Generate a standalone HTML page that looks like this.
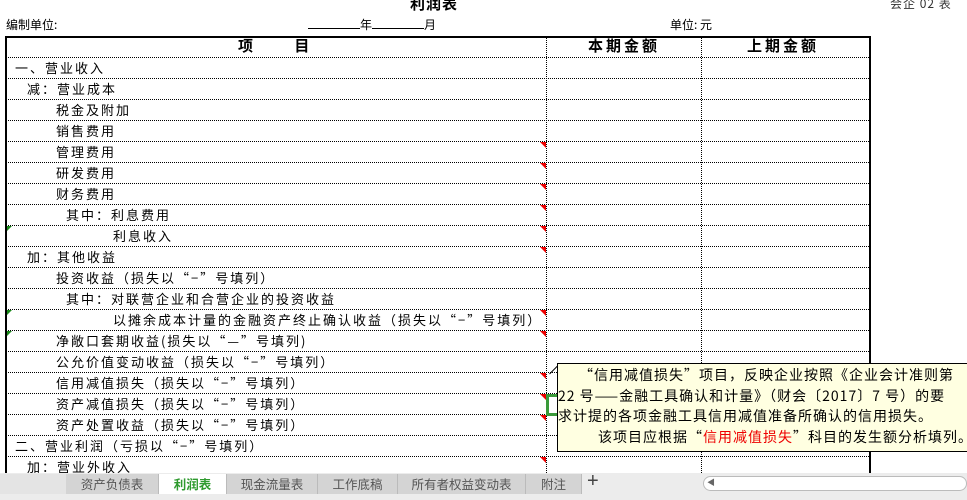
<!DOCTYPE html>
<html><head><meta charset="utf-8"><style>
*{margin:0;padding:0;box-sizing:border-box}
body{width:967px;height:500px;overflow:hidden;background:#fff;font-family:"Noto Sans CJK SC","Liberation Sans",sans-serif;font-size:13px;color:#000;position:relative}
.a{position:absolute;white-space:nowrap}
.row{position:absolute;left:6px;width:863px;height:21px;border-bottom:1px dotted #000}
.row span{position:absolute;top:1px;line-height:18px;white-space:nowrap;letter-spacing:2px}
.vl{position:absolute;top:37px;height:436px;border-left:1px dotted #000}
.rt{position:absolute;left:540px;width:0;height:0;border-top:6px solid #e00;border-left:6px solid transparent}
.gt{position:absolute;left:7px;width:0;height:0;border-top:5px solid #1a8a1a;border-right:5px solid transparent}
.tab{position:absolute;top:474px;height:20px;line-height:20px;text-align:center;background:#d4d4d4;color:#555;font-size:12.5px;border-right:1px solid #bbb}
</style></head><body>
<div class="a" style="left:410px;top:-7px;font-weight:bold;font-size:15px;letter-spacing:1px">利润表</div>
<div class="a" style="left:890px;top:-5px;font-size:12px;color:#333;letter-spacing:1px">会企 02 表</div>
<div class="a" style="left:6px;top:16px;font-size:12px">编制单位:</div>
<div class="a" style="left:308px;top:16px;font-size:12px"><span style="display:inline-block;width:52px;border-bottom:1px solid #000;height:12px"></span>年<span style="display:inline-block;width:52px;border-bottom:1px solid #000;height:12px"></span>月</div>
<div class="a" style="left:670px;top:16px;font-size:12px">单位: 元</div>

<div style="position:absolute;left:5px;top:36px;width:866px;height:440px;border:2px solid #000;border-bottom:none"></div>
<div class="row" style="top:37px;height:21px"><span style="left:232px;font-size:15px;top:0;font-weight:bold;letter-spacing:3px">项&nbsp;&nbsp;&nbsp;&nbsp;&nbsp;&nbsp;目</span><span style="left:582px;font-size:15px;top:0;font-weight:bold;letter-spacing:3px">本期金额</span><span style="left:741px;font-size:15px;top:0;font-weight:bold;letter-spacing:3px">上期金额</span></div>
<div class="row" style="top:58px"><span style="left:9px">一、营业收入</span></div>
<div class="row" style="top:79px"><span style="left:21px">减：营业成本</span></div>
<div class="row" style="top:100px"><span style="left:50px">税金及附加</span></div>
<div class="row" style="top:121px"><span style="left:50px">销售费用</span></div>
<div class="row" style="top:142px"><span style="left:50px">管理费用</span></div>
<div class="row" style="top:163px"><span style="left:50px">研发费用</span></div>
<div class="row" style="top:184px"><span style="left:50px">财务费用</span></div>
<div class="row" style="top:205px"><span style="left:60px">其中：利息费用</span></div>
<div class="row" style="top:226px"><span style="left:107px">利息收入</span></div>
<div class="row" style="top:247px"><span style="left:21px">加：其他收益</span></div>
<div class="row" style="top:268px"><span style="left:50px">投资收益（损失以“−”号填列）</span></div>
<div class="row" style="top:289px"><span style="left:60px">其中：对联营企业和合营企业的投资收益</span></div>
<div class="row" style="top:310px"><span style="left:107px">以摊余成本计量的金融资产终止确认收益（损失以“−”号填列）</span></div>
<div class="row" style="top:331px"><span style="left:50px">净敞口套期收益(损失以“—”号填列)</span></div>
<div class="row" style="top:352px"><span style="left:50px">公允价值变动收益（损失以“−”号填列）</span></div>
<div class="row" style="top:373px"><span style="left:50px">信用减值损失（损失以“−”号填列）</span></div>
<div class="row" style="top:394px"><span style="left:50px">资产减值损失（损失以“−”号填列）</span></div>
<div class="row" style="top:415px"><span style="left:50px">资产处置收益（损失以“−”号填列）</span></div>
<div class="row" style="top:436px"><span style="left:9px">二、营业利润（亏损以“−”号填列）</span></div>
<div class="row" style="top:457px"><span style="left:21px">加：营业外收入</span></div>
<div class="vl" style="left:546px"></div>
<div class="vl" style="left:701px"></div>

<div class="rt" style="top:142px"></div><div class="rt" style="top:163px"></div><div class="rt" style="top:184px"></div><div class="rt" style="top:205px"></div><div class="rt" style="top:226px"></div><div class="rt" style="top:247px"></div><div class="rt" style="top:310px"></div><div class="rt" style="top:331px"></div><div class="rt" style="top:373px"></div><div class="rt" style="top:394px"></div><div class="rt" style="top:415px"></div><div class="rt" style="top:457px"></div>
<div class="gt" style="top:226px"></div><div class="gt" style="top:310px"></div><div class="gt" style="top:331px"></div>

<div style="position:absolute;left:546px;top:394px;width:12px;height:22px;border:3px solid #3a9a3a;border-right:none"></div>
<div style="position:absolute;left:546px;top:365px;width:12px;height:1px;background:#000;transform:rotate(-45deg);transform-origin:right"></div>
<div style="position:absolute;left:557px;top:363px;width:420px;height:89px;background:#ffffe1;border:1px solid #000;font-size:14px;letter-spacing:1px;line-height:20.5px;padding:1px 0 0 0;white-space:nowrap">
<div style="padding-left:21px">“信用减值损失”项目，反映企业按照《企业会计准则第</div>
<div>22 号——金融工具确认和计量》（财会〔2017〕7 号）的要</div>
<div>求计提的各项金融工具信用减值准备所确认的信用损失。</div>
<div style="padding-left:40px">该项目应根据“<span style="color:#e00">信用减值损失</span>”科目的发生额分析填列。</div>
</div>

<div style="position:absolute;left:0;top:473px;width:967px;height:27px;background:#ececec"></div>
<div style="position:absolute;left:0;top:474px;width:66px;height:20px;background:#e4e4e4"></div>
<div class="tab" style="left:66px;width:93px">资产负债表</div>
<div class="tab" style="left:159px;width:68px;background:#fff;color:#2e9a2e;font-weight:bold">利润表</div>
<div class="tab" style="left:227px;width:91px">现金流量表</div>
<div class="tab" style="left:318px;width:80px">工作底稿</div>
<div class="tab" style="left:398px;width:128px">所有者权益变动表</div>
<div class="tab" style="left:526px;width:56px">附注</div>
<div class="a" style="left:587px;top:470px;font-size:20px;color:#444;font-family:'Liberation Sans',sans-serif">+</div>
<div style="position:absolute;left:703px;top:476px;width:264px;height:15px;border:1px solid #bbb;border-radius:8px;background:#fff"></div>
<div class="a" style="left:707px;top:477px;font-size:8px;color:#666">◀</div>
</body></html>
